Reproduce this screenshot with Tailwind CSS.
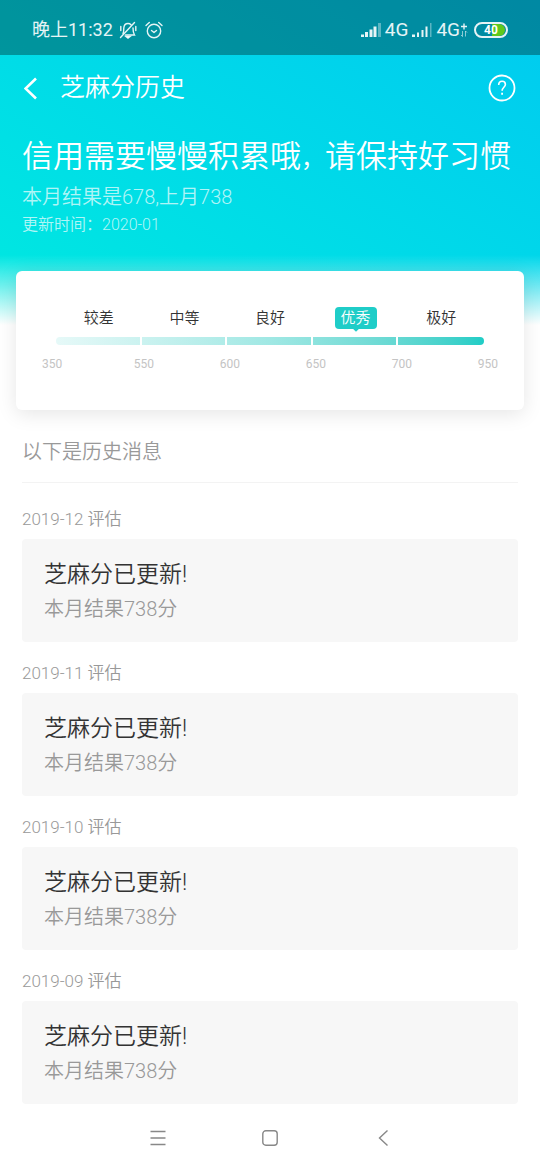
<!DOCTYPE html>
<html lang="zh-CN">
<head>
  <meta charset="UTF-8">
  <title>芝麻分历史</title>
  <meta name="viewport" content="width=device-width, initial-scale=1.0">
  <script src="https://cdn.jsdelivr.net/npm/@tailwindcss/browser@4"></script>
</head>
<body class="bg-white font-['Roboto','Noto_Sans_CJK_SC',sans-serif] font-[350]">
  <div id="page" class="min-h-screen flex flex-col">

    <header class="relative bg-linear-to-tr from-[#00e9e0] to-[#00caf0] text-white pb-[88px]">
      <!-- fade to page background -->
      <div class="absolute inset-x-0 bottom-0 h-[70px] bg-linear-to-b from-white/0 to-white"></div>

      <!-- status bar -->
      <div class="h-[55px] bg-black/32 pl-8 pr-8 pt-1 flex items-center justify-between text-white/90">
        <div class="flex items-center">
          <span class="text-lg leading-6 font-normal">晚上11:32</span>
          <svg class="ml-1.5 w-[18px] h-[18px]" viewBox="0 0 18 18" fill="none" stroke="currentColor" stroke-width="1.4" stroke-linecap="round">
            <path d="M4 12.5C5 11 4.600 9 4.800 7 5 4 6.500 2.500 9 2.500c1.200 0 2.200.4 3 1.200M14 7c0 3 .3 5 1.500 7H6.500"/>
            <path d="M1.500 16.500 15.500 1.500M1.800 5.500v4M16.800 5.500v4"/>
            <path d="M7 15.500h4L9 17z" fill="currentColor"/>
          </svg>
          <svg class="ml-2 w-[18px] h-[18px]" viewBox="0 0 18 18" fill="none" stroke="currentColor" stroke-width="1.400" stroke-linecap="round" stroke-linejoin="round">
            <circle cx="9" cy="10" r="6.700"/>
            <path d="M6.500 9.500 9 11.500l2.500-2M1 4.500 4.300 1.500M17 4.500l-3.300-3"/>
          </svg>
        </div>
        <div class="flex items-center">
          <svg class="w-5 h-4" viewBox="0 0 20 16" fill="currentColor">
            <path d="M0 12.500h3V15H0zM4 10h3v5H4zM8.500 7.500h3V15h-3zM12.500 4.500h3V15h-3z"/>
            <path d="M17 1h3v14h-3z" opacity=".4"/>
          </svg>
          <span class="ml-1 text-[19px] leading-6 font-normal">4G</span>
          <svg class="ml-1 w-5 h-4" viewBox="0 0 20 16" fill="currentColor">
            <path d="M0 12.500h3V15H0zM5 10.500h2V15H5zM9.500 8h2v7h-2zM13.500 4.500h2V15h-2z"/>
            <path d="M18 1h1.500v14H18z" opacity=".4"/>
          </svg>
          <span class="ml-1 text-[19px] leading-6 font-normal">4G</span>
          <svg class="w-2 h-4" viewBox="0 0 8 16" fill="none" stroke="currentColor">
            <path d="M1 4.500h6M4 1.500v6" stroke-width="1.400"/>
            <path d="M2.500 9v5.500L1 13M5.500 14.500V9L7 10.500" opacity=".6"/>
          </svg>
          <div class="ml-1.5 w-[34px] h-4 rounded-full border-2 border-white/90 relative flex items-center justify-center">
            <div class="absolute inset-y-0 right-px w-[13px] rounded-r-full bg-[#5fc91c]"></div>
            <span class="relative text-xs leading-3 font-bold text-white">40</span>
          </div>
        </div>
      </div>

      <!-- title bar -->
      <div class="h-[66px] px-6 flex items-center">
        <button type="button" aria-label="返回" class="w-4 h-6 flex items-center">
          <svg class="w-4 h-6" viewBox="0 0 16 24" fill="none" stroke="currentColor" stroke-width="2.600">
            <path d="M12 2.500 1.500 12.500 12 22.500"/>
          </svg>
        </button>
        <h1 class="ml-5 text-[25px] leading-8">芝麻分历史</h1>
        <button type="button" aria-label="帮助" class="ml-auto w-7 h-7">
          <svg class="w-7 h-7" viewBox="0 0 28 28" fill="none" stroke="currentColor">
            <circle cx="14" cy="14" r="12.500" stroke-width="1.800"/>
            <path d="M10.700 11c0-2.200 1.300-3.700 3.400-3.700s3.300 1.300 3.300 3.200c0 2.600-3.300 3-3.300 6.300" stroke-width="1.600"/>
            <path d="M14.100 18.800v2" stroke-width="1.800"/>
          </svg>
        </button>
      </div>

      <div class="px-[22px] pt-3.5">
        <h2 class="text-[31px] leading-[44px] whitespace-nowrap">信用需要慢慢积累哦<span class="text-2xl">，</span>请保持好习惯</h2>
        <p class="mt-1 text-xl leading-7 text-white/70">本月结果是678,上月738</p>
        <p class="mt-0.5 text-base leading-6 text-white/70">更新时间：2020-01</p>
      </div>
    </header>

    <!-- score card -->
    <section class="relative mx-4 -mt-[54px] px-[26px] pt-9 pb-[37px] bg-white rounded-md shadow-[0_4px_20px_rgba(0,0,0,0.1)]">
      <div class="px-3.5 grid grid-cols-5 justify-items-center text-[15px] leading-[22px] text-[#333]">
        <span>较差</span>
        <span>中等</span>
        <span>良好</span>
        <span class="relative px-1.5 rounded bg-[#1fcdc8] text-white">优秀
          <i class="absolute left-1/2 -bottom-0.5 -ml-0.5 w-1 h-1 rotate-45 bg-[#1fcdc8]"></i>
        </span>
        <span>极好</span>
      </div>
      <div class="mx-3.5 mt-2 h-2 rounded-full overflow-hidden grid grid-cols-5 divide-x-2 divide-white bg-linear-to-r from-[#e6f9f8] via-[#a0e8e4] to-[#1fcdc6]">
        <span></span><span></span><span></span><span></span><span></span>
      </div>
      <div class="mt-2.5 flex text-xs leading-[18px] font-normal text-[#c4c4c4]">
        <span class="w-[26px]">350</span>
        <div class="flex-1 grid grid-cols-5 text-right">
          <span>550</span>
          <span>600</span>
          <span>650</span>
          <span>700</span>
          <span>950</span>
        </div>
      </div>
    </section>

    <main class="px-[22px] text-[#999]">
      <h3 class="pt-7 pb-4 text-xl leading-7 border-b border-[#f3f3f3]">以下是历史消息</h3>

      <section class="pt-6">
        <h4 class="text-[17px] leading-6">2019-12 评估</h4>
        <div class="mt-2 px-[22px] pt-[22px] pb-[19px] rounded bg-[#f7f7f7]">
          <p class="text-[23px] leading-7 text-[#333]">芝麻分已更新!</p>
          <p class="mt-1.5 text-xl leading-7">本月结果738分</p>
        </div>
      </section>

      <section class="pt-[19px]">
        <h4 class="text-[17px] leading-6">2019-11 评估</h4>
        <div class="mt-2 px-[22px] pt-[22px] pb-[19px] rounded bg-[#f7f7f7]">
          <p class="text-[23px] leading-7 text-[#333]">芝麻分已更新!</p>
          <p class="mt-1.5 text-xl leading-7">本月结果738分</p>
        </div>
      </section>

      <section class="pt-[19px]">
        <h4 class="text-[17px] leading-6">2019-10 评估</h4>
        <div class="mt-2 px-[22px] pt-[22px] pb-[19px] rounded bg-[#f7f7f7]">
          <p class="text-[23px] leading-7 text-[#333]">芝麻分已更新!</p>
          <p class="mt-1.5 text-xl leading-7">本月结果738分</p>
        </div>
      </section>

      <section class="pt-[19px]">
        <h4 class="text-[17px] leading-6">2019-09 评估</h4>
        <div class="mt-2 px-[22px] pt-[22px] pb-[19px] rounded bg-[#f7f7f7]">
          <p class="text-[23px] leading-7 text-[#333]">芝麻分已更新!</p>
          <p class="mt-1.5 text-xl leading-7">本月结果738分</p>
        </div>
      </section>
    </main>

    <!-- system navigation -->
    <nav class="mt-auto h-16 flex items-center justify-center gap-24 text-[#888]">
      <button type="button" aria-label="菜单">
        <svg class="w-4 h-4" viewBox="0 0 16 16" fill="none" stroke="currentColor" stroke-width="1.300">
          <path d="M.5 1.500h15M.5 8h15M.5 14.500h15"/>
        </svg>
      </button>
      <button type="button" aria-label="主页">
        <svg class="w-4 h-4" viewBox="0 0 16 16" fill="none" stroke="currentColor" stroke-width="1.400">
          <rect x=".8" y=".8" width="14.400" height="14.400" rx="3"/>
        </svg>
      </button>
      <button type="button" aria-label="后退">
        <svg class="w-4 h-4" viewBox="0 0 16 16" fill="none" stroke="currentColor" stroke-width="1.400">
          <path d="M13.500.5 5.500 8l8 7.500"/>
        </svg>
      </button>
    </nav>
  </div>
</body>
</html>
